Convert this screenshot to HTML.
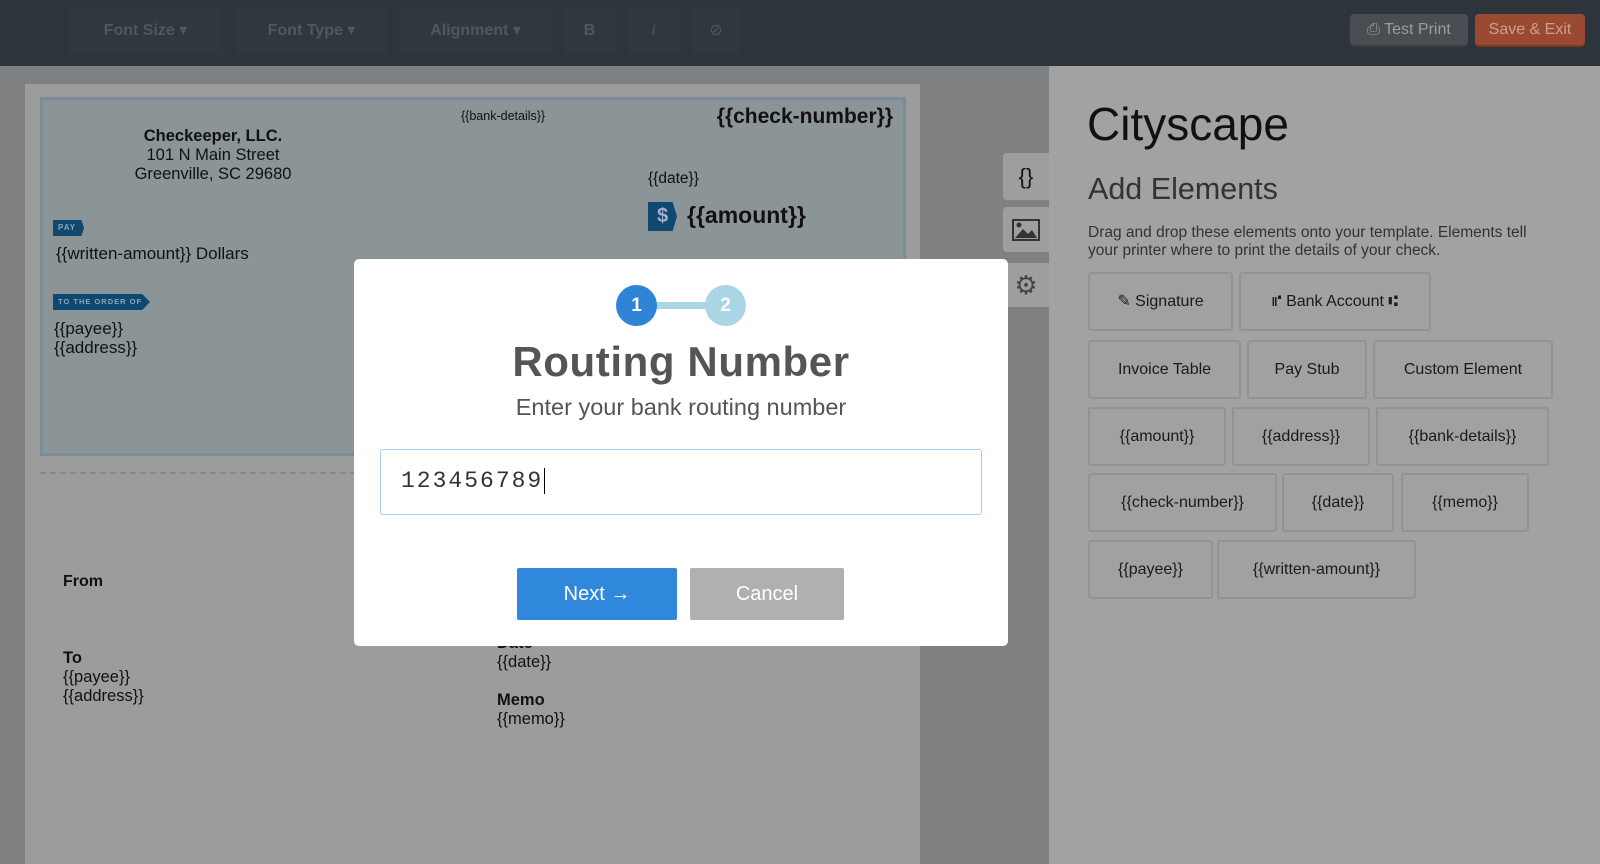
<!DOCTYPE html>
<html style="width:1600px;height:864px;overflow:hidden"><head><meta charset="utf-8"><style>
*{box-sizing:border-box;margin:0;padding:0}
body{width:1600px;height:864px;overflow:hidden;position:relative;background:#7e8082;font-family:"Liberation Sans","DejaVu Sans",sans-serif;color:#111}
.a{position:absolute;white-space:nowrap}
#top{position:absolute;left:0;top:0;width:1600px;height:66px;background:#2d343b}
.tb{position:absolute;top:8px;height:46px;background:#30373e;color:#4f5861;font-weight:bold;font-size:16px;line-height:46px;text-align:center}
.paper{position:absolute;left:25px;top:84px;width:895px;height:780px;background:#9c9c9c}
.check{position:absolute;left:40px;top:97px;width:866px;height:359px;background:#8b9497;border:3px solid #7a8c98}
.tag{position:absolute;background:#0f4970;color:#8aa4b8;font-size:8px;font-weight:bold;letter-spacing:1px;line-height:16px;padding-left:5px;clip-path:polygon(0 0,92% 0,100% 50%,92% 100%,0 100%)}
.rp{position:absolute;left:1049px;top:66px;width:551px;height:798px;background:#a2a2a2}
.btn{position:absolute;height:59px;border:2px solid #939393;border-radius:3px;background:#a1a1a1;font-size:16px;line-height:55px;text-align:center;color:#1a1a1a}
.side{position:absolute;left:1003px;width:46px;background:#9e9e9e;border-radius:4px 0 0 4px}
</style></head><body>
<div id="top">
<div class="tb" style="left:69px;width:153px">Font Size ▾</div>
<div class="tb" style="left:235px;width:153px">Font Type ▾</div>
<div class="tb" style="left:400px;width:151px">Alignment ▾</div>
<div class="tb" style="left:563px;width:53px">B</div>
<div class="tb" style="left:627px;width:53px;font-style:italic;font-weight:normal">i</div>
<div class="tb" style="left:691px;width:50px;font-weight:normal">⊘</div>
<div class="a" style="left:1350px;top:14px;width:118px;height:31px;background:#4a4e53;border-radius:4px;color:#9a9c9e;font-size:16px;line-height:31px;text-align:center;box-shadow:0 2px 0 #3a3d41">⎙ Test Print</div>
<div class="a" style="left:1475px;top:14px;width:110px;height:31px;background:#994a31;border-radius:4px;color:#caa191;font-size:16px;line-height:31px;text-align:center;box-shadow:0 2px 0 #7a3a26">Save &amp; Exit</div>
</div>

<div class="paper"></div>
<div class="check"></div>
<div class="a" style="left:113px;top:127px;width:200px;text-align:center;font-size:16.5px;line-height:19px"><b>Checkeeper, LLC.</b><br>101 N Main Street<br>Greenville, SC 29680</div>
<div class="a" style="left:461px;top:109px;font-size:12.5px">{{bank-details}}</div>
<div class="a" style="left:690px;top:105px;width:203px;text-align:right;font-size:21px;font-weight:bold">{{check-number}}</div>
<div class="a" style="left:648px;top:170px;font-size:15.5px">{{date}}</div>
<div class="a" style="left:648px;top:202px;width:29px;height:29px;background:#0f4970;color:#aac;font-weight:bold;font-size:20px;line-height:29px;text-align:center;clip-path:polygon(0 0,85% 0,100% 50%,85% 100%,0 100%)">$</div>
<div class="a" style="left:687px;top:202px;font-size:23px;font-weight:bold">{{amount}}</div>
<div class="tag" style="left:53px;top:220px;width:31px">PAY</div>
<div class="a" style="left:56px;top:244px;font-size:17px">{{written-amount}} Dollars</div>
<div class="tag" style="left:53px;top:294px;width:97px;font-size:7.5px">TO THE ORDER OF</div>
<div class="a" style="left:54px;top:319px;font-size:17px;line-height:19px">{{payee}}<br>{{address}}</div>
<div class="a" style="left:40px;top:472px;width:866px;border-top:2px dashed #8a8a8a"></div>
<div class="a" style="left:63px;top:573px;font-size:16px;font-weight:bold">From</div>
<div class="a" style="left:63px;top:649px;font-size:16.5px;line-height:19px"><b>To</b><br>{{payee}}<br>{{address}}</div>
<div class="a" style="left:497px;top:634px;font-size:16.5px;line-height:19px"><b>Date</b><br>{{date}}</div>
<div class="a" style="left:497px;top:691px;font-size:16.5px;line-height:19px"><b>Memo</b><br>{{memo}}</div>

<div class="side" style="top:153px;height:47px;font-size:22px;line-height:47px;text-align:center">{}</div>
<div class="side" style="top:207px;height:45px"><svg width="46" height="45"><rect x="10" y="13" width="26" height="20" fill="none" stroke="#333" stroke-width="2"/><path d="M12 31 L20 22 L25 27 L29 23 L34 31Z" fill="#333"/><circle cx="16" cy="18" r="2.5" fill="#333"/></svg></div>
<div class="side" style="top:263px;height:44px;font-size:26px;line-height:44px;text-align:center;color:#444">⚙</div>

<div class="rp"></div>
<div class="a" style="left:1087px;top:97px;font-size:46px;color:#111">Cityscape</div>
<div class="a" style="left:1088px;top:172px;font-size:30.5px;color:#333">Add Elements</div>
<div class="a" style="left:1088px;top:224px;font-size:15.5px;line-height:18px;color:#333">Drag and drop these elements onto your template. Elements tell<br>your printer where to print the details of your check.</div>
<div class="btn" style="left:1088px;top:272px;width:145px">✎ Signature</div>
<div class="btn" style="left:1239px;top:272px;width:192px">⑈ Bank Account ⑆</div>
<div class="btn" style="left:1088px;top:340px;width:153px">Invoice Table</div>
<div class="btn" style="left:1247px;top:340px;width:120px">Pay Stub</div>
<div class="btn" style="left:1373px;top:340px;width:180px">Custom Element</div>
<div class="btn" style="left:1088px;top:407px;width:138px">{{amount}}</div>
<div class="btn" style="left:1232px;top:407px;width:138px">{{address}}</div>
<div class="btn" style="left:1376px;top:407px;width:173px">{{bank-details}}</div>
<div class="btn" style="left:1088px;top:473px;width:189px">{{check-number}}</div>
<div class="btn" style="left:1282px;top:473px;width:112px">{{date}}</div>
<div class="btn" style="left:1401px;top:473px;width:128px">{{memo}}</div>
<div class="btn" style="left:1088px;top:540px;width:125px">{{payee}}</div>
<div class="btn" style="left:1217px;top:540px;width:199px">{{written-amount}}</div>

<div class="a" style="left:354px;top:259px;width:654px;height:387px;background:#fff;border-radius:5px"></div>
<div class="a" style="left:656px;top:302px;width:50px;height:7px;background:#a9d5e5"></div>
<div class="a" style="left:616px;top:285px;width:41px;height:41px;border-radius:50%;background:#2f84d8;color:#fff;font-size:19px;font-weight:bold;line-height:41px;text-align:center">1</div>
<div class="a" style="left:705px;top:285px;width:41px;height:41px;border-radius:50%;background:#a9d5e5;color:#fff;font-size:19px;font-weight:bold;line-height:41px;text-align:center">2</div>
<div class="a" style="left:354px;top:338px;width:654px;text-align:center;font-size:42px;letter-spacing:0.6px;font-weight:bold;color:#555">Routing Number</div>
<div class="a" style="left:354px;top:394px;width:654px;text-align:center;font-size:23.5px;color:#555">Enter your bank routing number</div>
<div class="a" style="left:380px;top:449px;width:602px;height:66px;border:1.5px solid #a9d0e8;border-radius:3px;font-family:'Liberation Mono',monospace;font-size:23px;line-height:63px;padding-left:20px;letter-spacing:2px;color:#333">123456789<span style="border-left:1.5px solid #000;margin-left:1px"></span></div>
<div class="a" style="left:517px;top:568px;width:160px;height:52px;background:#2f88db;border-radius:2px;color:#fff;font-size:20px;line-height:52px;text-align:center">Next →</div>
<div class="a" style="left:690px;top:568px;width:154px;height:52px;background:#b0b0b0;border-radius:2px;color:#fff;font-size:20px;line-height:52px;text-align:center">Cancel</div>
</body></html>
